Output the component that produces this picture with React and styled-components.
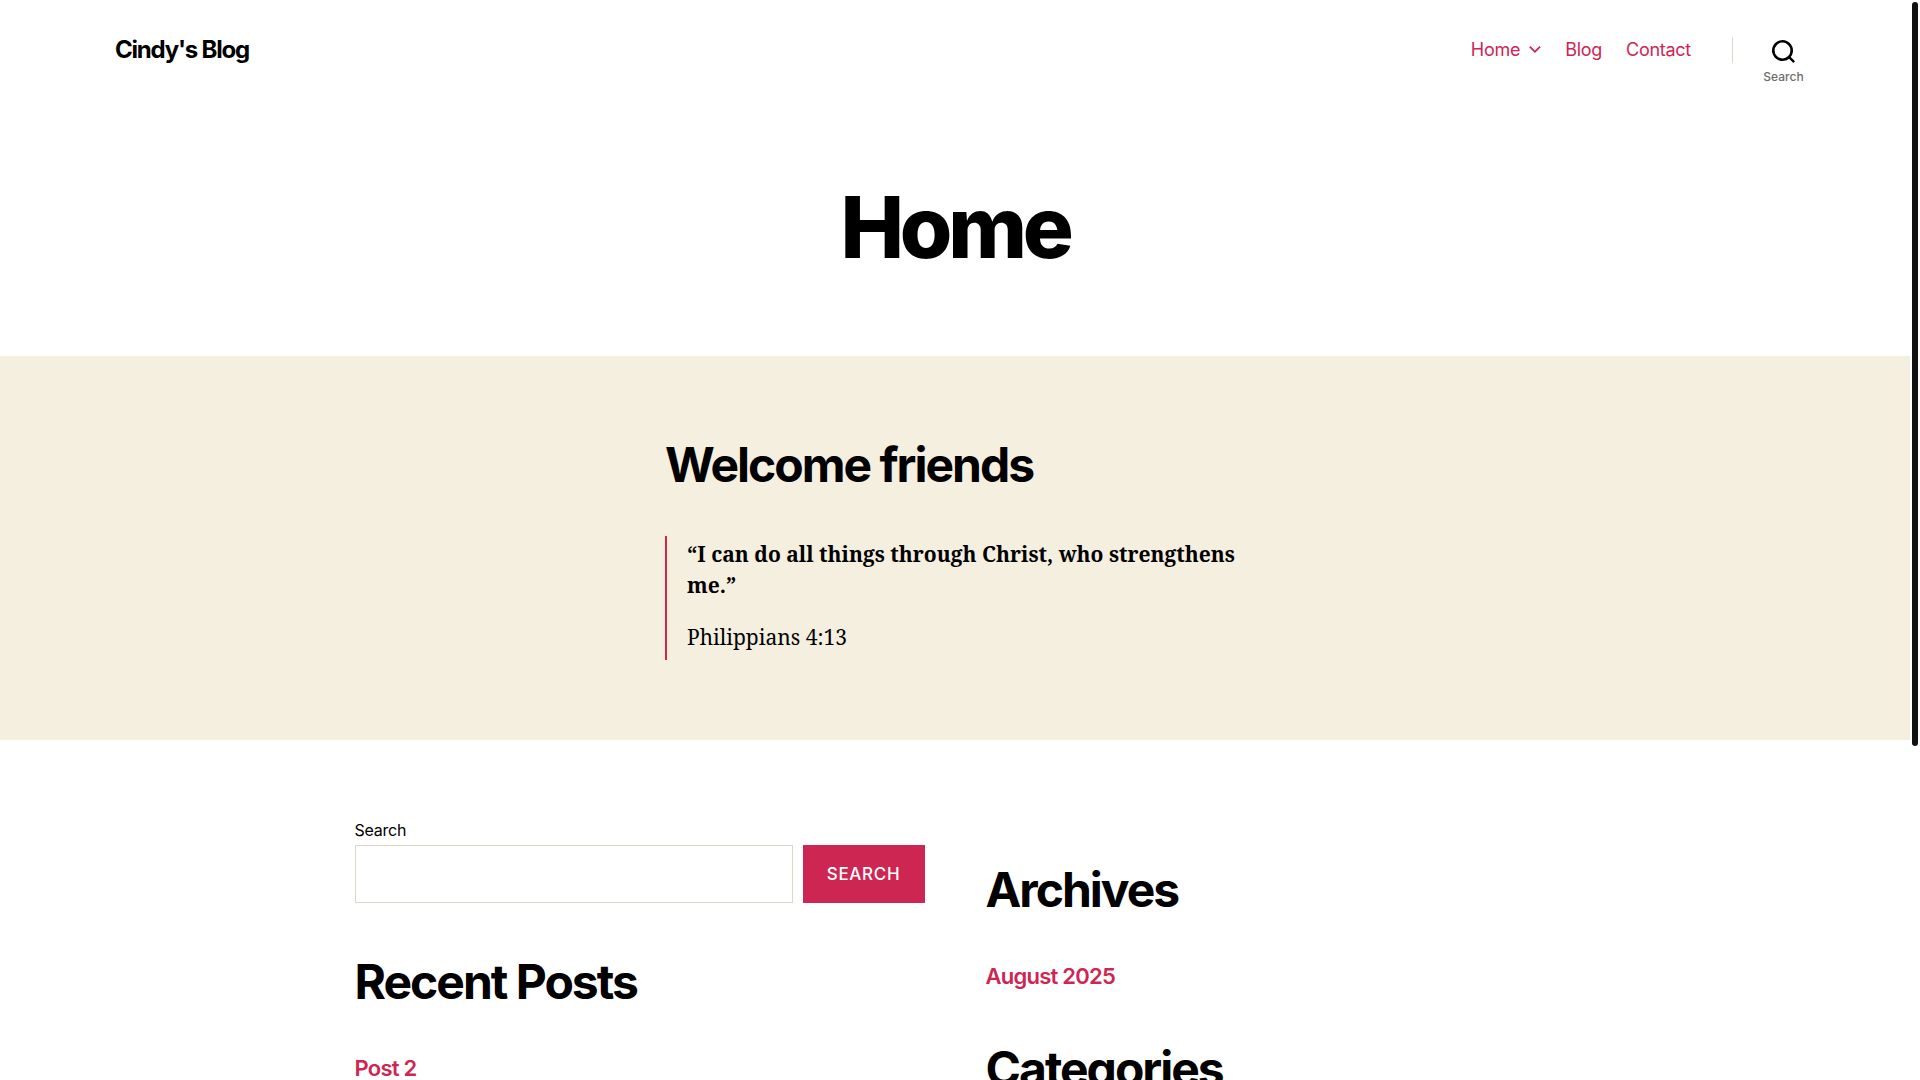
import React from "react";
import styled, { createGlobalStyle } from "styled-components";

const GlobalStyle = createGlobalStyle`
    html::-webkit-scrollbar {
        display: none;
    }

    body {
        margin: 0;
        padding-right: 10px;
        background: #fff;
        color: #000;
        font-family: Inter, "Liberation Sans", sans-serif;
    }

    a {
        color: inherit;
        text-decoration: none;
    }
`;

const App = () => {
    return (
        <>
            <GlobalStyle />
            <Header>
                <SiteTitle href="#">Cindy's Blog</SiteTitle>
                <HeaderRight>
                    <Nav>
                        <NavItem href="#">
                            Home
                            <svg width="12" height="7" viewBox="0 0 20 12" fill="currentColor">
                                <polygon points="9.9 7.78 17.68 0 19.8 2.12 9.9 12.02 0 2.12 2.12 0" />
                            </svg>
                        </NavItem>
                        <NavItem href="#">Blog</NavItem>
                        <NavItem href="#">Contact</NavItem>
                    </Nav>
                    <SearchToggle>
                        <svg width="23" height="23" viewBox="0 0 23 23" fill="#000">
                            <path
                                fillRule="evenodd"
                                d="M18.71 17.06 23 21.35 21.35 23l-4.29-4.29A10.5 10.5 0 1 1 18.71 17.06ZM10.5 18.4a7.9 7.9 0 1 0 0-15.8 7.9 7.9 0 0 0 0 15.8Z"
                            />
                        </svg>
                        <span>Search</span>
                    </SearchToggle>
                </HeaderRight>
            </Header>

            <PageTitle>Home</PageTitle>

            <Hero>
                <HeroInner>
                    <HeroHeading>Welcome friends</HeroHeading>
                    <Quote>
                        <QuoteText>“I can do all things through Christ, who strengthens me.”</QuoteText>
                        <QuoteCite>Philippians 4:13</QuoteCite>
                    </Quote>
                </HeroInner>
            </Hero>

            <Widgets>
                <div>
                    <SearchForm>
                        <SearchLabel htmlFor="widget-search">Search</SearchLabel>
                        <SearchRow>
                            <SearchInput id="widget-search" type="search" />
                            <SearchButton type="button">Search</SearchButton>
                        </SearchRow>
                    </SearchForm>
                    <WidgetHeading>Recent Posts</WidgetHeading>
                    <WidgetList>
                        <li><a href="#">Post 2</a></li>
                        <li><a href="#">Post 1</a></li>
                    </WidgetList>
                </div>
                <RightColumn>
                    <WidgetHeading $first>Archives</WidgetHeading>
                    <WidgetList>
                        <li><a href="#">August 2025</a></li>
                    </WidgetList>
                    <WidgetHeading>Categories</WidgetHeading>
                    <WidgetList>
                        <li><a href="#">Uncategorized</a></li>
                    </WidgetList>
                </RightColumn>
            </Widgets>

            <ScrollThumb />
        </>
    );
};

// styled components
const Header = styled.header`
    display: flex;
    align-items: flex-start;
    justify-content: space-between;
    padding: 29px 75px 0 115px;
`;

const SiteTitle = styled.a`
    font-size: 24px;
    font-weight: 700;
    line-height: 41px;
    letter-spacing: -0.05em;
    color: #000;
`;

const HeaderRight = styled.div`
    display: flex;
    align-items: flex-start;
`;

const Nav = styled.nav`
    display: flex;
    gap: 24px;
    padding-top: 7px;
`;

const NavItem = styled.a`
    display: flex;
    align-items: center;
    gap: 9px;
    height: 26px;
    font-size: 18px;
    letter-spacing: -0.015em;
    color: #cd2653;
`;

const SearchToggle = styled.div`
    display: flex;
    flex-direction: column;
    align-items: center;
    width: 103px;
    margin-left: 41px;
    padding-top: 11px;
    position: relative;
    color: #6d6d6d;

    &::before {
        content: "";
        position: absolute;
        left: 0;
        top: 8px;
        height: 26px;
        width: 1px;
        background: #dcd7ca;
    }

    span {
        margin-top: 6px;
        font-size: 12px;
        line-height: 16px;
        font-weight: 500;
    }
`;

const PageTitle = styled.h1`
    margin: 95px 0 0;
    padding-bottom: 80px;
    text-align: center;
    font-size: 85px;
    line-height: 96px;
    font-weight: 800;
    letter-spacing: -0.05em;
`;

const Hero = styled.section`
    background: #f5efe0;
    padding: 81px 0 80px;
`;

const HeroInner = styled.div`
    width: 580px;
    margin: 0 auto;
`;

const HeroHeading = styled.h2`
    margin: 0 0 44px;
    font-size: 48px;
    line-height: 55px;
    font-weight: 700;
    letter-spacing: -0.0416em;
`;

const Quote = styled.blockquote`
    margin: 0;
    padding: 3px 0 7px 20px;
    border-left: 2px solid #cd2653;
    font-family: "Noto Serif", "Liberation Serif", serif;
    font-size: 21px;
    line-height: 31px;
`;

const QuoteText = styled.p`
    margin: 0 0 21px;
    font-weight: 700;
`;

const QuoteCite = styled.p`
    margin: 0;
`;

const Widgets = styled.section`
    display: grid;
    grid-template-columns: 570px 570px;
    column-gap: 61px;
    width: 1201px;
    margin: 0 auto;
    padding: 80px 0 500px;
`;

const RightColumn = styled.div`
    padding-top: 42px;
`;

const SearchForm = styled.form`
    display: flex;
    flex-direction: column;
`;

const SearchLabel = styled.label`
    font-size: 16px;
    line-height: 20px;
    margin-bottom: 5px;
    letter-spacing: -0.015em;
`;

const SearchRow = styled.div`
    display: flex;
    gap: 10px;
`;

const SearchInput = styled.input`
    flex: 1;
    height: 58px;
    box-sizing: border-box;
    border: 1px solid #dcd7ca;
    background: #fff;
    outline: none;
`;

const SearchButton = styled.button`
    width: 122px;
    height: 58px;
    border: 0;
    background: #cd2653;
    color: #fff;
    font-family: inherit;
    font-size: 17px;
    font-weight: 500;
    letter-spacing: 0.04em;
    text-transform: uppercase;
`;

const WidgetHeading = styled.h2`
    margin: ${(props) => (props.$first ? "0" : "51px")} 0 0;
    font-size: 48px;
    line-height: 55px;
    font-weight: 700;
    letter-spacing: -0.0416em;
`;

const WidgetList = styled.ul`
    list-style: none;
    margin: 45px 0 4px;
    padding: 0;
    font-size: 22px;
    line-height: 28px;
    font-weight: 600;
    letter-spacing: -0.034em;
    color: #cd2653;

    li + li {
        margin-top: 20px;
    }
`;

// the page's own scrollbar does not show in the capture, so its thumb is drawn over the page
const ScrollThumb = styled.div`
    position: fixed;
    top: 2px;
    right: 2px;
    width: 6px;
    height: 744px;
    border-radius: 3px;
    background: #111;
`;

export default App;
